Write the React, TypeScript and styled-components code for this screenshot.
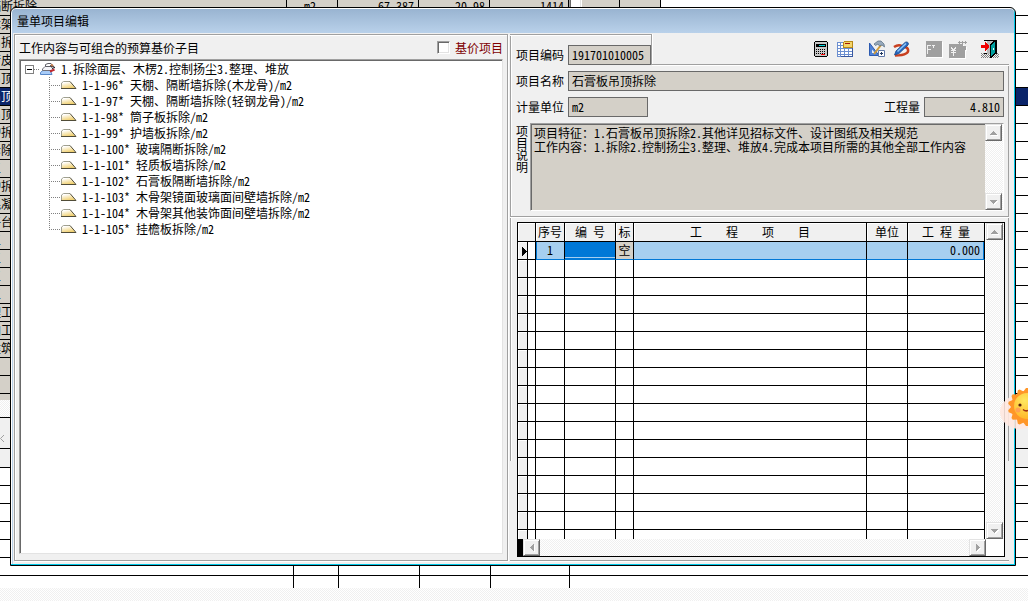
import React from "react";
import styled, { createGlobalStyle, css } from "styled-components";

const face = "#f0f0f0";
const shade = "#a0a0a0";
const darkShade = "#696969";
const fieldFill = "#d4d0c8";
const navy = "#0a246a";
const hatch = css`
  background: repeating-conic-gradient(#ffffff 0 25%, #f0f0f0 0 50%) 0 0 / 2px 2px;
`;

const GlobalStyle = createGlobalStyle`
  * { box-sizing: border-box; }
  html, body, #root { height: 100%; }
  body {
    margin: 0;
    overflow: hidden;
    background: #fff;
    color: #000;
    font: 12px/16px "Noto Sans Mono CJK SC", "Noto Sans CJK SC", "Liberation Mono", monospace;
  }
  button, input, textarea, select { font: inherit; color: inherit; margin: 0; border-radius: 0; }
`;

/* ---------- sheet behind the dialog ---------- */

const Desktop = styled.div`
  position: relative;
  height: 100%;
  overflow: hidden;
  display: flex;
  flex-direction: column;
  background: #fff;
`;

const SheetView = styled.div`
  height: 400px;
  flex: none;
  overflow: hidden;
  display: flex;
  flex-direction: column;
  justify-content: flex-end;
`;

const SheetTable = styled.table`
  width: 100%;
  table-layout: fixed;
  border-collapse: separate;
  border-spacing: 0;
`;

const SheetCell = styled.td<{ $align?: string; $tone?: "fill" | "navy" | "none" }>`
  height: 18px;
  padding: 0 4px 0 0;
  overflow: hidden;
  white-space: nowrap;
  vertical-align: top;
  line-height: 16px;
  text-align: ${(p) => p.$align ?? "left"};
  border-bottom: 1px solid #000;
  border-right: ${(p) => (p.$tone === "none" ? "0" : "1px solid #000")};
  background: ${(p) => (p.$tone === "navy" ? navy : p.$tone === "none" ? "#fff" : fieldFill)};
  color: ${(p) => (p.$tone === "navy" ? "#fff" : "#000")};
`;

const SheetName = styled(SheetCell)`
  text-indent: -11px;
`;

const SheetEndCell = styled(SheetCell)<{ $active?: boolean }>`
  background: ${(p) => (p.$active ? navy : "#fff")};
`;

const SheetFoot = styled.div`
  height: 6px;
  flex: none;
  background: ${fieldFill};
`;

const HatchBand = styled.div<{ $h?: number }>`
  ${hatch}
  height: ${(p) => (p.$h ? `${p.$h}px` : "auto")};
  flex: ${(p) => (p.$h ? "none" : "1")};
  border-bottom: ${(p) => (p.$h ? "1px solid #000" : "0")};
`;

const FaceBand = styled.div<{ $h: number }>`
  height: ${(p) => p.$h}px;
  flex: none;
  background: ${face};
  border-bottom: 1px solid #000;
  svg { display: block; margin-top: 16px; }
`;

const LowerTable = styled(SheetTable)`
  flex: none;
  td {
    height: 18px;
    padding: 0;
    border-bottom: 1px solid #000;
    border-right: 1px solid #000;
  }
  td:last-child { border-right: 0; }
  tr:last-child td { height: 12px; border-bottom: 0; }
`;

/* ---------- dialog ---------- */

const Dialog = styled.section`
  position: absolute;
  inset: 7px 12px 35px 10px;
  display: flex;
  flex-direction: column;
  padding: 1px 1px 4px;
  border: 1px solid #000;
  border-radius: 6px 6px 0 0;
  background: ${face};
  box-shadow: inset -1px -1px 0 #00c8e8, inset 1px 1px 0 #fff, inset 2px 0 0 #b9d1ea;
`;

const TitleBar = styled.header`
  height: 24px;
  flex: none;
  padding: 0 5px;
  border-radius: 4px 4px 0 0;
  background: linear-gradient(#99b4d1, #b9d1ea);
  h1 {
    margin: 0;
    font: inherit;
    line-height: 24px;
  }
`;

const Panels = styled.div`
  flex: 1;
  min-height: 0;
  display: grid;
  grid-template-columns: minmax(0, 494fr) minmax(0, 499fr);
  grid-template-rows: minmax(0, 1fr);
  gap: 2px;
  padding: 1px 5px 0 2px;
`;

const TreePanel = styled.div`
  min-width: 0;
  display: flex;
  flex-direction: column;
  padding: 1px 4px 6px;
  border: 1px solid ${shade};
  box-shadow: 1px 1px 0 #fff, inset 1px 1px 0 #fff;
`;

const TreeHead = styled.div`
  height: 23px;
  flex: none;
  display: flex;
  align-items: center;
  justify-content: space-between;
`;

const CheckLabel = styled.label`
  display: flex;
  align-items: center;
  gap: 5px;
  color: #800000;
`;

const CheckBox = styled.input`
  appearance: none;
  width: 13px;
  height: 13px;
  background: #fff;
  border: 1px solid;
  border-color: ${shade} #fff #fff ${shade};
  box-shadow: inset 1px 1px 0 ${darkShade}, inset -1px -1px 0 #e3e3e3;
`;

const Tree = styled.ul`
  flex: 1;
  min-height: 0;
  margin: 0;
  padding: 1px 0 0 4px;
  list-style: none;
  overflow: hidden;
  background: #fff;
  border: 1px solid;
  border-color: ${shade} #e3e3e3 #e3e3e3 ${shade};
  box-shadow: inset 1px 1px 0 ${darkShade};
`;

const TreeRow = styled.div`
  height: 16px;
  display: flex;
  align-items: center;
  white-space: pre;
`;

const Expander = styled.button`
  width: 9px;
  height: 9px;
  padding: 0;
  margin-left: 1px;
  border: 1px solid #808080;
  background: linear-gradient(#000, #000) center / 5px 1px no-repeat #fff;
`;

const Dots = styled.span<{ $w: number }>`
  width: ${(p) => p.$w}px;
  height: 1px;
  background: repeating-linear-gradient(90deg, #808080 0 1px, transparent 1px 2px);
`;

const Branch = styled.ul`
  margin: 0;
  padding: 0 0 0 25px;
  list-style: none;
`;

const Leaf = styled.li`
  background: repeating-linear-gradient(#808080 0 1px, transparent 1px 2px) 0 0 / 1px 16px no-repeat;
  &:last-child { background-size: 1px 8px; }
`;

const NodeText = styled.span`
  margin-left: 5px;
`;

/* ---------- right side ---------- */

const EditPanel = styled.div`
  min-width: 0;
  display: flex;
  flex-direction: column;
  border-bottom: 1px solid ${shade};
  box-shadow: 0 1px 0 #fff;
  background:
    linear-gradient(${shade}, ${shade}) 0 0 / 1px calc(100% - 99px) no-repeat,
    linear-gradient(#fff, #fff) 1px 0 / 1px calc(100% - 99px) no-repeat,
    linear-gradient(${shade}, ${shade}) 100% 31px / 1px calc(100% - 130px) no-repeat;
`;

const TopRow = styled.div`
  display: flex;
  height: 31px;
  flex: none;
`;

const CodeTab = styled.div`
  width: 142px;
  flex: none;
  padding: 10px 0 0 6px;
  border-top: 1px solid ${shade};
  border-right: 1px solid ${shade};
  box-shadow: inset 0 1px 0 #fff, 1px 0 0 #fff;
`;

const Toolbar = styled.div`
  flex: 1;
  display: flex;
  align-items: center;
  justify-content: flex-end;
  gap: 14px;
  padding-right: 10px;
  border-bottom: 1px solid ${shade};
  box-shadow: 0 1px 0 #fff;
`;

const ToolGroup = styled.div`
  display: flex;
  gap: 6px;
`;

const ToolButton = styled.button`
  width: 18px;
  height: 18px;
  padding: 0;
  border: 0;
  background: none;
  svg { display: block; overflow: visible; }
`;

const Form = styled.div`
  flex: none;
  display: flex;
  flex-direction: column;
  gap: 6px;
  padding: 6px 5px 5px 6px;
  border-bottom: 1px solid ${shade};
  box-shadow: 0 1px 0 #fff;
`;

const FieldRow = styled.div`
  display: flex;
  justify-content: space-between;
`;

const Field = styled.label<{ $wide?: boolean }>`
  display: flex;
  align-items: center;
  gap: 4px;
  flex: ${(p) => (p.$wide ? "1" : "none")};
`;

const TextBox = styled.input<{ $align?: string }>`
  width: 80px;
  height: 20px;
  flex: 1 0 auto;
  padding: 0 3px 2px;
  border: 1px solid ${darkShade};
  background: ${fieldFill};
  text-align: ${(p) => p.$align ?? "left"};
`;

const MemoRow = styled.div`
  display: flex;
  gap: 2px;
`;

const MemoLabel = styled.label`
  width: 12px;
  padding-top: 2px;
  line-height: 12px;
  word-break: break-all;
`;

const MemoBox = styled.div`
  flex: 1;
  height: 88px;
  display: flex;
  border: 1px solid;
  border-color: ${shade} #fff #fff ${shade};
`;

const Memo = styled.textarea`
  flex: 1;
  min-width: 0;
  padding: 1px 2px;
  border: 0;
  border-left: 1px solid ${darkShade};
  border-top: 1px solid ${darkShade};
  outline: 0;
  resize: none;
  overflow: hidden;
  line-height: 14px;
  background: ${fieldFill};
`;

const ScrollTrack = styled.div<{ $across?: boolean }>`
  ${hatch}
  display: flex;
  flex-direction: ${(p) => (p.$across ? "row" : "column")};
  justify-content: space-between;
  ${(p) => (p.$across ? "flex: 1; height: 17px;" : "flex: none; width: 18px;")}
`;

const ScrollButton = styled.button`
  width: 17px;
  height: 17px;
  padding: 0;
  display: flex;
  align-items: center;
  justify-content: center;
  background: ${face};
  border: 1px solid;
  border-color: #e3e3e3 ${darkShade} ${darkShade} #e3e3e3;
  box-shadow: inset 1px 1px 0 #fff, inset -1px -1px 0 ${shade};
`;

const GridFrame = styled.div`
  flex: 1;
  min-height: 0;
  margin: 5px 4px 3px 7px;
  display: grid;
  grid-template-columns: minmax(0, 1fr) 18px;
  grid-template-rows: minmax(0, 1fr) 17px;
  border: 1px solid #000;
  background: #fff;
`;

const GridView = styled.div`
  overflow: hidden;
  padding-right: 1px;
`;

const ItemTable = styled.table`
  width: 100%;
  table-layout: fixed;
  border-collapse: separate;
  border-spacing: 0;
  th, td {
    height: 18px;
    padding: 0;
    vertical-align: top;
    line-height: 16px;
    font-weight: normal;
    text-align: center;
    white-space: pre;
    overflow: hidden;
    border-right: 1px solid #000;
    border-bottom: 1px solid #000;
  }
  th {
    height: 19px;
    line-height: 18px;
    background: ${face};
    box-shadow: inset 1px 1px 0 #fff;
  }
`;

const Gutter = styled.td`
  background: ${face};
  box-shadow: inset 1px 1px 0 #fff;
  svg { display: block; margin: 5px 0 0 4px; }
`;

const ActiveCell = styled.td<{ $kind?: "first" | "picked" | "flag" | "last" }>`
  && {
    background: ${(p) => (p.$kind === "picked" ? "#0078d7" : "#a6cff0")};
    border-bottom-color: #0078d7;
    ${(p) => p.$kind === "first" && "box-shadow: inset 1px 0 0 #0078d7;"}
    ${(p) => p.$kind === "picked" && "box-shadow: inset 0 -1px 0 #0078d7, inset 0 -2px 0 #a6cff0;"}
    ${(p) => p.$kind === "flag" && `background: ${fieldFill};`}
    ${(p) => p.$kind === "last" && "text-align: right; padding-right: 4px; box-shadow: inset -1px 0 0 #0078d7;"}
  }
`;

const ScrollEnd = styled.div`
  display: flex;
`;

const BlackStub = styled.span`
  width: 5px;
  background: #000;
`;

const SunBadge = styled.div`
  position: absolute;
  right: 0;
  top: 386px;
  width: 28px;
  height: 46px;
  svg { display: block; }
`;

/* ---------- drawings ---------- */

const arrows = {
  up: "M0 4H7V3H6V2H5V1H4V0H3V1H2V2H1V3H0Z",
  down: "M0 0H7V1H6V2H5V3H4V4H3V3H2V2H1V1H0Z",
  left: "M4 0V7H3V6H2V5H1V4H0V3H1V2H2V1H3V0Z",
  right: "M0 0V7H1V6H2V5H3V4H4V3H3V2H2V1H1V0Z",
};

function Arrow({ dir }: { dir: keyof typeof arrows }) {
  return (
    <svg width="8" height="8" shapeRendering="crispEdges" aria-hidden="true">
      <path d={arrows[dir]} fill="#fff" transform={dir === "left" || dir === "right" ? "translate(3 1)" : "translate(1 3)"} />
      <path d={arrows[dir]} fill={shade} transform={dir === "left" || dir === "right" ? "translate(2 0)" : "translate(0 2)"} />
    </svg>
  );
}

function StackIcon() {
  return (
    <svg width="16" height="14" aria-hidden="true">
      <path d="M0.5 12.5V10.5L4 7.5H10L12 12.5Z" fill="#a8ccf8" stroke="#5888c8" />
      <path d="M2.500 8.500V7L5 4.500H11L14 8.500Z" fill="#f4f4f8" stroke="#707078" />
      <path d="M5.500 4.500V2.500L8 1.500H11L13.500 4.500Z" fill="#fff" stroke="#606068" />
      <path d="M10 3.500L15 5.500L12 6.500" fill="none" stroke="#282830" />
      <path d="M10 9.500L14.500 7.500" stroke="#c02830" strokeWidth="2" />
      <path d="M11 2.500L13 4" stroke="#c07848" strokeWidth="2" />
    </svg>
  );
}

function LeafIcon() {
  return (
    <svg width="16" height="10" aria-hidden="true">
      <defs>
        <linearGradient id="leaf" x1="0" y1="0" x2="0.4" y2="1">
          <stop offset="0.2" stopColor="#ffffff" />
          <stop offset="1" stopColor="#f0d070" />
        </linearGradient>
      </defs>
      <path d="M0.5 8.5V3L2.5 1.5H9L14.5 8.5Z" fill="url(#leaf)" />
      <path d="M0.5 8V3L2.5 1.5H9" fill="none" stroke="#a0a090" />
      <path d="M9 1.5L15 8.5H0" fill="none" stroke="#504c38" />
    </svg>
  );
}

function CalculatorIcon() {
  return (
    <svg width="18" height="18" shapeRendering="crispEdges" aria-hidden="true">
      <path d="M2 1H14V2H15V16H14V17H2V16H1V2H2Z" fill="#000" />
      <path d="M2 2H14V16H2Z" fill="#c8c8c8" />
      <path d="M3 4H13V7H3Z" fill="#000" />
      <path d="M6 5H12V6H6Z" fill="#00d8e0" />
      <path d="M3 9H13M3 11H13M3 13H13" stroke="#000" strokeDasharray="1 1" transform="translate(0 .5)" />
      <path d="M8 14H12V15H8Z" fill="#f00" />
    </svg>
  );
}

function SheetIcon() {
  return (
    <svg width="18" height="18" shapeRendering="crispEdges" aria-hidden="true">
      <path d="M0 2H16V17H0Z" fill="#6c8fd0" />
      <path d="M1 3H3V5H1ZM4 3H7V5H4ZM1 6H3V8H1ZM4 6H7V8H4ZM1 9H3V11H1ZM4 9H7V11H4ZM8 9H11V11H8ZM12 9H15V11H12ZM1 12H3V14H1ZM4 12H7V14H4ZM8 12H11V14H8ZM12 12H15V14H12ZM1 15H3V16H1ZM4 15H7V16H4ZM8 15H11V16H8ZM12 15H15V16H12Z" fill="#fff" />
      <path d="M7 1H16V8H6V2H7Z" fill="#b88818" />
      <path d="M7 2H15V7H7Z" fill="#f4d468" />
      <path d="M8 3H13V4H8Z" fill="#a01808" />
      <path d="M15 8H16V17H4V16H15Z" fill="#3858a0" />
    </svg>
  );
}

function ToolsIcon() {
  return (
    <svg width="18" height="18" aria-hidden="true">
      <path d="M0.5 3V15.5H10Z" fill="#4f83d8" stroke="#2c5ab0" />
      <path d="M3 9.500V13H6Z" fill="#f0f0f0" />
      <path d="M5 14L12 5" stroke="#d09c38" strokeWidth="2" />
      <path d="M5 4L9 1H12L15 4L15.500 7L13 5L10.500 6L9 4L6.500 5.500Z" fill="#98aabc" stroke="#506880" strokeWidth=".7" />
      <path d="M9.500 10.500H15.500V16.500H9.500Z" fill="#fff" stroke="#6078a8" />
      <path d="M11 13.500H14M12.500 12V15" stroke="#203860" />
    </svg>
  );
}

function PenIcon() {
  return (
    <svg width="18" height="18" aria-hidden="true">
      <path d="M1 7C4 5 7 5 9 6M12 7C16 8 16 12 13 13.500C10 15.500 6 15.500 2 15.500" fill="none" stroke="#c84020" strokeWidth="2.500" />
      <path d="M1.500 15L3 11L12 2.500C14 1 16.500 3 15 5L6 13.500Z" fill="#2868c0" stroke="#184888" strokeWidth=".8" />
      <path d="M4.500 11.500L13 3.500" stroke="#90c8f8" strokeWidth="1.500" />
    </svg>
  );
}

function DisabledFormIcon() {
  return (
    <svg width="18" height="18" shapeRendering="crispEdges" aria-hidden="true">
      <path d="M2 2H18V18H2Z" fill="#fff" />
      <path d="M1 1H17V17H1Z" fill={shade} />
      <path d="M2 5H6V6H3V9H6V10H3V14H2ZM7 5H10V6H9V8H8V6H7Z" fill={face} />
    </svg>
  );
}

function DisabledMoneyIcon() {
  return (
    <svg width="20" height="18" shapeRendering="crispEdges" aria-hidden="true">
      <path d="M1 5H15V7H18V11H17V19H1Z" fill="#fff" />
      <path d="M0 4H14V6H17V10H16V18H0Z" fill={shade} />
      <path d="M9 2H18M10.500 1V4M13.500 1V4M16.500 1V4" stroke={shade} />
      <path d="M2 7H3V8H4V9H5V8H6V7H7V9H6V10H7V11H5V12H7V13H5V16H4V13H2V12H4V11H2V10H3V9H2Z" fill={face} />
    </svg>
  );
}

function ExitIcon() {
  return (
    <svg width="18" height="18" shapeRendering="crispEdges" aria-hidden="true">
      <path d="M0 13.500H18M1 14.500H18M0 15.500H18M1 16.500H18M0 17.500H18" stroke="#808080" strokeDasharray="1 1" />
      <path d="M3 0H16V14H3V13H6V1H3Z" fill="#000" />
      <path d="M6 1H15V14H6Z" fill="#b8b8b8" />
      <path d="M9 4H10V3H11V2H12V1H13V0H15V14H14V15H13V16H12V17H11V18H9Z" fill="#000" />
      <path d="M10 5H11V4H12V3H13V2H14V13H13V14H12V15H11V16H10Z" fill="#00a0a0" />
      <path d="M12 8H13V10H12Z" fill="#e0ffff" />
      <path d="M0 5H4V2H5V3H6V4H7V5H8V8H7V9H6V10H5V11H4V8H0Z" fill="#f00000" />
    </svg>
  );
}

function Sun() {
  const rays = Array.from({ length: 14 }, (_, i) => (i * 360) / 14);
  return (
    <svg width="28" height="46" role="img" aria-label="sun">
      <defs>
        <radialGradient id="face" cx=".4" cy=".3" r=".8">
          <stop offset="0" stopColor="#ffe860" />
          <stop offset="1" stopColor="#ffb020" />
        </radialGradient>
      </defs>
      <ellipse cx="20" cy="26" rx="20" ry="17" fill="#ffe8e0" opacity=".9" />
      <g fill="#ff9628" transform="translate(27 21)">
        <circle r="16" />
        {rays.map((a) => (
          <path key={a} d="M-4 -15L-1 -19H1L4 -15Z" transform={`rotate(${a})`} />
        ))}
      </g>
      <circle cx="27" cy="20" r="13" fill="url(#face)" />
      <circle cx="18" cy="24" r="2.500" fill="#ff9060" opacity=".7" />
      <circle cx="20" cy="19" r="1.600" fill="#5a2010" />
      <path d="M23 23.500Q26 26 29 24" stroke="#a03010" strokeWidth="1.500" fill="none" />
    </svg>
  );
}

/* ---------- data ---------- */

const sheetNames = [
  "木架", "吊拆", "铲皮", "吊顶", "吊顶", "吊顶", "护拆", "拆除", "三",
  "护拆", "混凝", "平台", "三", "三", "三", "三", "理工", "加工程", "建筑", "", "",
];

const leaves = [
  "1-1-96* 天棚、隔断墙拆除(木龙骨)/m2",
  "1-1-97* 天棚、隔断墙拆除(轻钢龙骨)/m2",
  "1-1-98* 筒子板拆除/m2",
  "1-1-99* 护墙板拆除/m2",
  "1-1-100* 玻璃隔断拆除/m2",
  "1-1-101* 轻质板墙拆除/m2",
  "1-1-102* 石膏板隔断墙拆除/m2",
  "1-1-103* 木骨架镜面玻璃面间壁墙拆除/m2",
  "1-1-104* 木骨架其他装饰面间壁墙拆除/m2",
  "1-1-105* 挂檐板拆除/m2",
];

const memoText =
  "项目特征：1.石膏板吊顶拆除2.其他详见招标文件、设计图纸及相关规范\n" +
  "工作内容：1.拆除2.控制扬尘3.整理、堆放4.完成本项目所需的其他全部工作内容";

const emptyRows = Array.from({ length: 16 }, (_, i) => i);
const lowerRows = Array.from({ length: 7 }, (_, i) => i);

function Backdrop() {
  return (
    <>
      <SheetView>
        <SheetTable>
          <colgroup>
            {[287, 51, 81, 71, 79, 51, 41].map((w, i) => <col key={i} style={{ width: w }} />)}
            <col />
          </colgroup>
          <tbody>
            <tr>
              <SheetName>隔断拆除</SheetName>
              <SheetCell $align="center">m2</SheetCell>
              <SheetCell $align="right">67.387</SheetCell>
              <SheetCell $align="right">20.98</SheetCell>
              <SheetCell $align="right">1414</SheetCell>
              <SheetCell><CheckBox type="checkbox" aria-label="选择" /></SheetCell>
              <SheetCell />
              <SheetCell $tone="none" />
            </tr>
            {sheetNames.map((name, i) => (
              <tr key={i}>
                <SheetName colSpan={7} $tone={i === 4 ? "navy" : "fill"}>{name}</SheetName>
                <SheetEndCell $tone="none" $active={i === 4} />
              </tr>
            ))}
          </tbody>
        </SheetTable>
        <SheetFoot />
      </SheetView>
      <HatchBand $h={18} />
      <FaceBand $h={31}>
        <svg width="5" height="9" aria-hidden="true">
          <path d="M4 1L0.500 4.500L4 8" fill="none" stroke={shade} />
        </svg>
      </FaceBand>
      <FaceBand $h={19} />
      <LowerTable>
        <colgroup>
          {[294, 45, 81, 71, 79].map((w, i) => <col key={i} style={{ width: w }} />)}
          <col />
        </colgroup>
        <tbody>
          {lowerRows.map((r) => (
            <tr key={r}><td /><td /><td /><td /><td /><td /></tr>
          ))}
        </tbody>
      </LowerTable>
      <HatchBand />
    </>
  );
}

function VerticalScroll() {
  return (
    <ScrollTrack>
      <ScrollButton type="button" aria-label="向上"><Arrow dir="up" /></ScrollButton>
      <ScrollButton type="button" aria-label="向下"><Arrow dir="down" /></ScrollButton>
    </ScrollTrack>
  );
}

function ItemGrid() {
  return (
    <GridFrame>
      <GridView>
        <ItemTable>
          <colgroup>
            {[10, 8, 29, 51, 18].map((w, i) => <col key={i} style={{ width: w }} />)}
            <col />
            <col style={{ width: 41 }} />
            <col style={{ width: 77 }} />
          </colgroup>
          <thead>
            <tr>
              <th colSpan={2} />
              <th>序号</th>
              <th>编 号</th>
              <th>标</th>
              <th>工    程    项    目</th>
              <th>单位</th>
              <th>工 程 量</th>
            </tr>
          </thead>
          <tbody>
            <tr>
              <Gutter>
                <svg width="5" height="9" shapeRendering="crispEdges" aria-hidden="true">
                  <path d="M0 0H1V1H2V2H3V3H4V4H5V5H4V6H3V7H2V8H1V9H0Z" />
                </svg>
              </Gutter>
              <td />
              <ActiveCell $kind="first">1</ActiveCell>
              <ActiveCell $kind="picked" />
              <ActiveCell $kind="flag">空</ActiveCell>
              <ActiveCell />
              <ActiveCell />
              <ActiveCell $kind="last">0.000</ActiveCell>
            </tr>
            {emptyRows.map((r) => (
              <tr key={r}><Gutter /><td /><td /><td /><td /><td /><td /><td /></tr>
            ))}
          </tbody>
        </ItemTable>
      </GridView>
      <VerticalScroll />
      <ScrollEnd>
        <BlackStub />
        <ScrollTrack $across>
          <ScrollButton type="button" aria-label="向左"><Arrow dir="left" /></ScrollButton>
          <ScrollButton type="button" aria-label="向右"><Arrow dir="right" /></ScrollButton>
        </ScrollTrack>
      </ScrollEnd>
    </GridFrame>
  );
}

export default function App() {
  return (
    <Desktop>
      <GlobalStyle />
      <Backdrop />
      <Dialog role="dialog" aria-labelledby="dialog-title">
        <TitleBar><h1 id="dialog-title">量单项目编辑</h1></TitleBar>
        <Panels>
          <TreePanel>
            <TreeHead>
              <span>工作内容与可组合的预算基价子目</span>
              <CheckLabel><CheckBox type="checkbox" />基价项目</CheckLabel>
            </TreeHead>
            <Tree>
              <li>
                <TreeRow>
                  <Expander type="button" aria-label="折叠" />
                  <Dots $w={6} />
                  <StackIcon />
                  <NodeText>1.拆除面层、木楞2.控制扬尘3.整理、堆放</NodeText>
                </TreeRow>
                <Branch>
                  {leaves.map((text) => (
                    <Leaf key={text}>
                      <TreeRow>
                        <Dots $w={12} />
                        <LeafIcon />
                        <NodeText>{text}</NodeText>
                      </TreeRow>
                    </Leaf>
                  ))}
                </Branch>
              </li>
            </Tree>
          </TreePanel>
          <EditPanel>
            <TopRow>
              <CodeTab>
                <Field>项目编码<TextBox readOnly value="191701010005" /></Field>
              </CodeTab>
              <Toolbar>
                <ToolGroup>
                  <ToolButton type="button" aria-label="计算器"><CalculatorIcon /></ToolButton>
                  <ToolButton type="button" aria-label="表格"><SheetIcon /></ToolButton>
                </ToolGroup>
                <ToolGroup>
                  <ToolButton type="button" aria-label="工具"><ToolsIcon /></ToolButton>
                  <ToolButton type="button" aria-label="编辑"><PenIcon /></ToolButton>
                </ToolGroup>
                <ToolGroup>
                  <ToolButton type="button" disabled aria-label="表单"><DisabledFormIcon /></ToolButton>
                  <ToolButton type="button" disabled aria-label="费用"><DisabledMoneyIcon /></ToolButton>
                </ToolGroup>
                <ToolButton type="button" aria-label="退出"><ExitIcon /></ToolButton>
              </Toolbar>
            </TopRow>
            <Form>
              <Field $wide>项目名称<TextBox readOnly value="石膏板吊顶拆除" /></Field>
              <FieldRow>
                <Field>计量单位<TextBox readOnly value="m2" /></Field>
                <Field>工程量<TextBox readOnly $align="right" value="4.810" /></Field>
              </FieldRow>
              <MemoRow>
                <MemoLabel htmlFor="memo">项目说明</MemoLabel>
                <MemoBox>
                  <Memo id="memo" readOnly value={memoText} />
                  <VerticalScroll />
                </MemoBox>
              </MemoRow>
            </Form>
            <ItemGrid />
          </EditPanel>
        </Panels>
      </Dialog>
      <SunBadge><Sun /></SunBadge>
    </Desktop>
  );
}
